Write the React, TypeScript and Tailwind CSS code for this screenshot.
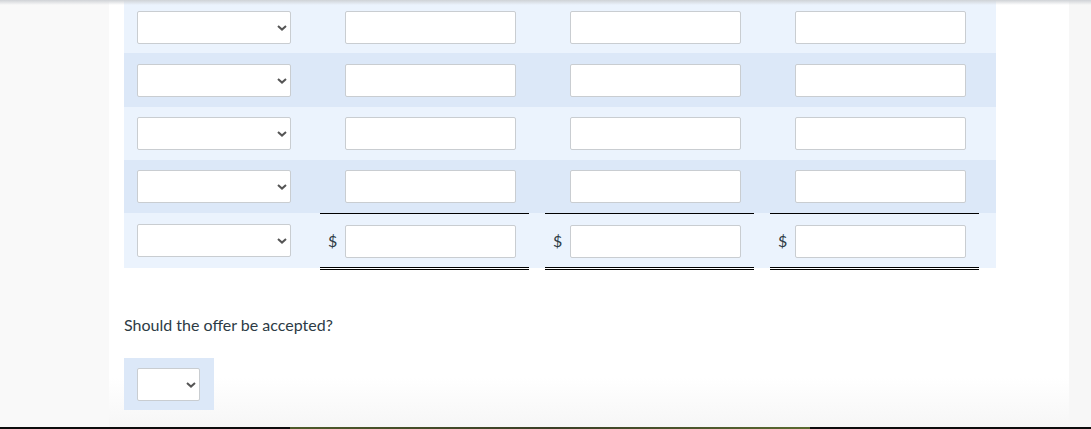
import React from 'react'

function Chevron() {
  return (
    <svg
      className="pointer-events-none absolute right-[4px] top-1/2 h-[6px] w-[10px] -translate-y-1/2"
      viewBox="0 0 10 6"
      fill="none"
      stroke="#555"
      strokeWidth="2"
    >
      <path d="M1 1l4 3.6L9 1" />
    </svg>
  )
}

function SelectBox({ width }: { width: string }) {
  return (
    <div className={`relative h-[33px] ${width}`}>
      <select className="h-full w-full appearance-none rounded-[2px] border border-[#c9cdd1] bg-white" />
      <Chevron />
    </div>
  )
}

function Cell({ dollar, last }: { dollar?: boolean; last?: boolean }) {
  if (last) {
    return (
      <div className="flex h-[57px] w-[209px] items-center self-start border-t border-b-[3px] border-double border-t-black border-b-black pt-[1px]">
        <span className="w-[25px] pl-[8px] text-[16px] text-[#2d3b45]">
          {dollar ? '$' : ''}
        </span>
        <input className="h-[33px] w-[171px] rounded-[2px] border border-[#c9cdd1] bg-white" />
      </div>
    )
  }
  return (
    <div className="flex w-[209px] items-start">
      <span className="w-[25px]" />
      <input className="h-[33px] w-[171px] rounded-[2px] border border-[#c9cdd1] bg-white" />
    </div>
  )
}

function Row({ bg, h, pt }: { bg: string; h: string; pt: string }) {
  return (
    <div className={`flex items-start ${h} ${bg} ${pt} pl-[13px]`}>
      <SelectBox width="w-[154px]" />
      <div className="ml-[29px] flex gap-[16px]">
        <Cell />
        <Cell />
        <Cell />
      </div>
    </div>
  )
}

export default function App() {
  return (
    <div
      className="relative flex h-[429px] w-full overflow-hidden bg-[#f8f8f8]"
      style={{ fontFamily: 'Lato, "Open Sans", sans-serif' }}
    >
      <div className="pointer-events-none absolute inset-x-0 top-0 z-10 h-[5px] bg-gradient-to-b from-[#cfd2d6] to-transparent" />
      <div className="w-[109px] shrink-0 bg-[#f9f9f9]" />
      <div className="flex w-[960px] shrink-0 flex-col bg-gradient-to-b from-white from-[88%] to-[#f6f6f6] pl-[15px]">
        <div className="w-[872px]">
          <Row bg="bg-[#ebf3fd]" h="h-[53px]" pt="pt-[11px]" />
          <Row bg="bg-[#dce8f8]" h="h-[54px]" pt="pt-[11px]" />
          <Row bg="bg-[#ebf3fd]" h="h-[53px]" pt="pt-[10px]" />
          <Row bg="bg-[#dce8f8]" h="h-[53px]" pt="pt-[10px]" />
          <div className="flex h-[55px] bg-[#ebf3fd] pl-[13px]">
            <div className="pt-[11px]">
              <SelectBox width="w-[154px]" />
            </div>
            <div className="ml-[29px] flex gap-[16px]">
              <Cell dollar last />
              <Cell dollar last />
              <Cell dollar last />
            </div>
          </div>
        </div>
        <p className="mt-[47px] text-[16px] leading-[20px] text-[#2d3b45]">
          Should the offer be accepted?
        </p>
        <div className="mt-[23px] h-[52px] w-[90px] bg-[#dce8f8] pl-[13px] pt-[10px]">
          <SelectBox width="w-[63px]" />
        </div>
      </div>
      <div className="flex-1 bg-[#f7f7f7]" />
      <div className="absolute inset-x-0 bottom-0 flex h-[2px] bg-[#0d0d0d]">
        <div className="ml-[290px] h-full w-[520px] bg-gradient-to-r from-[#4d5a2a] via-[#3a3f26] to-[#5a6a30]" />
      </div>
    </div>
  )
}
